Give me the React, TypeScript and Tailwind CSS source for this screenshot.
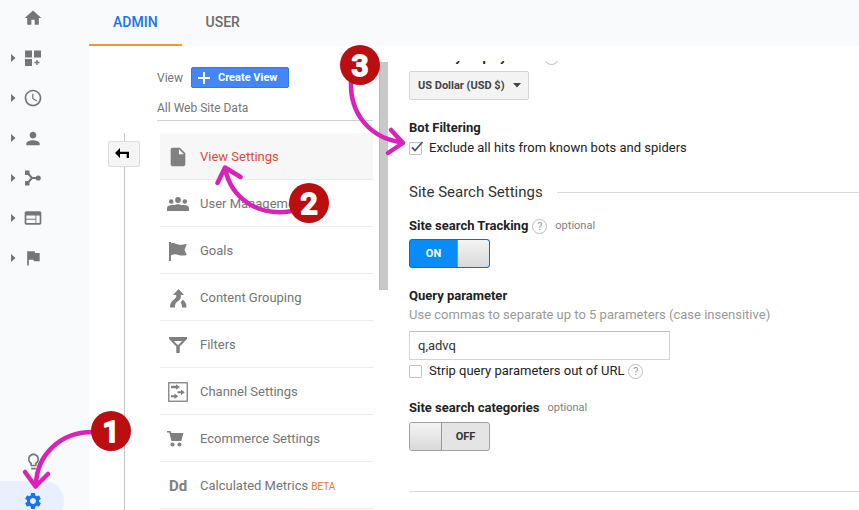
import { useState, type ReactNode } from "react";
import {
  MdAccessTime,
  MdFlag,
  MdHome,
  MdInsertDriveFile,
  MdLightbulbOutline,
  MdPerson,
  MdSettings,
  MdWeb,
} from "react-icons/md";

function DashboardIcon() {
  return (
    <svg width="16" height="16" viewBox="0 0 16 16" fill="currentColor">
      <path d="M0 .5h7v7H0zM9 .5h7v7H9zM0 9h7v7H0zM11.3 10h1.4v1.800h1.800v1.400h-1.800V15h-1.400v-1.800H9.500v-1.400h1.800z" />
    </svg>
  );
}

function BranchIcon() {
  return (
    <svg width="16" height="16" viewBox="0 0 16 16" fill="currentColor">
      <path d="M0 .5h4.500V5H0zM0 11h4.500v4.500H0z" />
      <path d="M2.500 3 7 8l-4.500 5M7 8h6" fill="none" stroke="currentColor" strokeWidth="2" />
      <circle cx="13.200" cy="8" r="2.600" />
    </svg>
  );
}

function GroupIcon() {
  return (
    <svg width="22" height="14" viewBox="0 0 22 14" fill="currentColor">
      <circle cx="11" cy="3" r="2.900" />
      <circle cx="4.200" cy="4.500" r="2.300" />
      <circle cx="17.800" cy="4.500" r="2.300" />
      <path d="M0 14v-3c0-2 2.400-3 5-3 1 0 1.900.1 2.600.3C8.500 7.500 9.700 7.200 11 7.200s2.500.3 3.400 1.100c.7-.2 1.600-.3 2.600-.3 2.600 0 5 1 5 3v3z" />
    </svg>
  );
}

function GoalIcon() {
  return (
    <svg width="18" height="19" viewBox="0 0 18 19" fill="currentColor">
      <path d="M0 0h2v1.200c4-1 5.500 1.600 9 1.600 2.500 0 4.500-.5 6.800-.8L15.500 8l2.300 5c-3 .8-5.800.8-8.300 0-2.500-.9-5-.9-7.500.2V19H0z" />
    </svg>
  );
}

function GroupingIcon() {
  return (
    <svg width="18" height="19" viewBox="0 0 18 19" fill="currentColor">
      <path d="M9.500 0 15 6h-3.200v2.500c0 1.200-.8 2-2 3C7 13.500 6 14.500 6 18.500H1c0-4.500 2-6.500 4.500-8.500C6.700 9 7.200 8.600 7.200 7.800V6H4z" />
      <path d="M11.500 13.300 14 10.800c2.300 2 3.500 4.200 3.500 7.700H13c0-2.400-.5-3.900-1.500-5.200z" />
    </svg>
  );
}

function FilterIcon() {
  return (
    <svg width="18" height="16" viewBox="0 0 18 16" fill="currentColor">
      <path fillRule="evenodd" d="M0 0h18v2l-7.300 7.500V16H7.300V9.500L0 2zM4.800 4 9 8.300 13.200 4z" />
    </svg>
  );
}

function ChannelIcon() {
  return (
    <svg width="20" height="20" viewBox="0 0 20 20" fill="currentColor">
      <rect x=".75" y=".75" width="18.500" height="18.500" fill="none" stroke="currentColor" strokeWidth="1.300" />
      <path d="M3 3.700h5V2.200L12 5 8 7.800V6.300H3zM9.500 9.300H13V7.600l3.800 2.700L13 13v-1.700H9.500zM3 13.300h3.500v-1.700l3.800 2.700L6.500 17v-1.700H3z" />
    </svg>
  );
}

function CartIcon() {
  return (
    <svg width="22" height="16" viewBox="0 0 22 16" fill="currentColor">
      <path d="M0 0h3.500l.8 2H16.500l-2.200 8H4.500L2.300 1.600H0z" />
      <circle cx="5.500" cy="13.500" r="2" />
      <circle cx="12.500" cy="13.500" r="2" />
    </svg>
  );
}

function BackIcon() {
  return (
    <svg width="18" height="12" viewBox="0 0 18 12">
      <path d="M0 5 5 0v3.700h9V10h-2.300V6H5v4z" fill="#000" />
    </svg>
  );
}

function NavItem({ label, icon, arrow = true }: { label: string; icon: ReactNode; arrow?: boolean }) {
  return (
    <button aria-label={label} className="flex h-10 w-full shrink-0 items-center pl-[11px] text-[#757575]">
      <svg width="5" height="8" viewBox="0 0 5 8" className={arrow ? "" : "invisible"}>
        <path d="M0 0l4.500 4L0 8z" fill="currentColor" />
      </svg>
      <span className="ml-[7px] flex w-5 justify-center">{icon}</span>
    </button>
  );
}

const settings: { label: string; icon: ReactNode; beta?: boolean }[] = [
  { label: "View Settings", icon: <MdInsertDriveFile size={22} /> },
  { label: "User Management", icon: <GroupIcon /> },
  { label: "Goals", icon: <GoalIcon /> },
  { label: "Content Grouping", icon: <GroupingIcon /> },
  { label: "Filters", icon: <FilterIcon /> },
  { label: "Channel Settings", icon: <ChannelIcon /> },
  { label: "Ecommerce Settings", icon: <CartIcon /> },
  { label: "Calculated Metrics", icon: <span className="text-[15px] font-bold">Dd</span>, beta: true },
];

function Help() {
  return (
    <button
      aria-label="Help"
      className="flex size-[15px] shrink-0 items-center justify-center rounded-full border border-[#bbb] text-[11px] leading-none text-[#999]"
    >
      ?
    </button>
  );
}

function Check({ id, label, initial = false }: { id: string; label: string; initial?: boolean }) {
  const [on, setOn] = useState(initial);
  return (
    <div className="flex h-5 items-center">
      <span className="relative flex">
        <input
          id={id}
          type="checkbox"
          checked={on}
          onChange={() => setOn(!on)}
          className="size-[13px] appearance-none rounded-[1px] border border-[#c4c4c4] bg-white"
        />
        {on && (
          <svg width="16" height="14" viewBox="0 0 16 14" className="pointer-events-none absolute -top-0.5 left-0">
            <path d="M3 7.500 6 10.500 13.500 2" fill="none" stroke="#555" strokeWidth="1.800" />
          </svg>
        )}
      </span>
      <label htmlFor={id} className="ml-[7px] text-[13px] leading-5 text-[#222]">
        {label}
      </label>
    </div>
  );
}

function Toggle({ id, label, initial }: { id: string; label: string; initial: boolean }) {
  const [on, setOn] = useState(initial);
  return (
    <label
      htmlFor={id}
      className={
        "relative flex h-[29px] w-[81px] overflow-hidden rounded-[3px] border text-[11px] font-bold " +
        (on ? "border-[#0b6fc4] bg-[#078cf8] text-white" : "flex-row-reverse border-[#a0a0a0] bg-[#e4e4e4] text-[#333]")
      }
    >
      <input
        id={id}
        type="checkbox"
        role="switch"
        aria-label={label}
        checked={on}
        onChange={() => setOn(!on)}
        className="sr-only"
      />
      <span className="flex flex-1 items-center justify-center pt-px">{on ? "ON" : "OFF"}</span>
      <span
        className={
          "w-8 bg-linear-to-b from-[#f4f4f4] to-[#d9d9d9] " +
          (on ? "rounded-r-[2px] border-l border-[#8f8f8f]" : "border-r border-[#999]")
        }
      />
    </label>
  );
}

function Annotations() {
  const badges = [
    { n: "1", x: 111, y: 431 },
    { n: "2", x: 309, y: 203 },
    { n: "3", x: 360, y: 65 },
  ];
  return (
    <svg width="859" height="510" viewBox="0 0 859 510" className="pointer-events-none absolute left-0 top-0">
      <g fill="none" stroke="#d922b9" strokeWidth="4.500" strokeLinecap="round" strokeLinejoin="round">
        <path d="M94 432C61 431 36 455 36 486M25 472l10.500 14.500L48 474" />
        <path d="M292 211C259 217 231 199 225 168M217.500 183l7.500-15.500 15.500 9.500" />
        <path d="M351 82C350 113 369 138 402 142.500M391 130l12 13-15 10" />
      </g>
      {badges.map((b) => (
        <g key={b.n}>
          <circle cx={b.x} cy={b.y} r="20" fill="#ba0e10" />
          <text
            x={b.x}
            y={b.y + 11}
            textAnchor="middle"
            fill="#fff"
            stroke="#fff"
            strokeWidth="2"
            strokeLinejoin="round"
            className="text-[30px] font-medium"
          >
            {b.n}
          </text>
        </g>
      ))}
    </svg>
  );
}

export default function App() {
  return (
    <div className="relative flex h-screen overflow-hidden bg-white font-[Roboto,sans-serif] text-[#222]">
      <nav className="flex w-[89px] shrink-0 flex-col overflow-hidden bg-[#f8fafc]">
        <div className="-mt-0.5">
          <NavItem label="Home" icon={<MdHome size={20} />} arrow={false} />
        </div>
        <NavItem label="Customization" icon={<DashboardIcon />} />
        <NavItem label="Realtime" icon={<MdAccessTime size={20} />} />
        <NavItem label="Audience" icon={<MdPerson size={21} />} />
        <NavItem label="Acquisition" icon={<BranchIcon />} />
        <NavItem label="Behavior" icon={<MdWeb size={20} />} />
        <NavItem label="Conversions" icon={<MdFlag size={20} />} />
        <div className="mt-[163px]">
          <NavItem label="Discover" icon={<MdLightbulbOutline size={19} />} arrow={false} />
        </div>
        <button aria-label="Admin" className="flex h-10 w-16 shrink-0 items-center rounded-r-full bg-[#e8f0fe] pl-[23px] text-[#1a73e8]">
          <MdSettings size={20} />
        </button>
      </nav>

      <div className="flex min-w-0 flex-1 flex-col">
        <header className="flex h-[46px] shrink-0 bg-[#f8fafc] text-sm font-medium">
          <button className="border-b-2 border-[#f29a2e] px-6 text-[#1a73e8]">ADMIN</button>
          <button className="border-b-2 border-transparent px-6 text-[#6b6b6b]">USER</button>
        </header>

        <div className="flex min-h-0 flex-1 overflow-hidden">
          <div className="flex w-[70px] shrink-0 flex-col items-center pt-[87px]">
            <span className="h-2 w-px bg-[#c4c4c4]" />
            <button
              aria-label="Collapse"
              className="flex h-[26px] w-8 shrink-0 items-center justify-center rounded-[2px] border border-[#dcdcdc] bg-[#f4f4f4]"
            >
              <BackIcon />
            </button>
            <span className="w-px flex-1 bg-[#c4c4c4]" />
          </div>

          <section className="-ml-0.5 w-[216px] shrink-0 pt-[21px] text-[#757575]">
            <div className="flex h-[21px] items-center text-xs">
              View
              <button className="ml-2 flex h-[21px] w-[98px] items-center rounded-[2px] border border-[#3079ed] bg-[#4486f5] pl-1.5 pt-px text-[11px] font-bold text-white">
                <svg width="12" height="12" viewBox="0 0 12 12" className="mr-2">
                  <path d="M6 0v12M0 6h12" stroke="#fff" strokeWidth="2" />
                </svg>
                Create View
              </button>
            </div>
            <div className="mt-[11px] border-b border-[#d0d0d0] pb-[3px] text-xs leading-[18px]">All Web Site Data</div>
            <ul className="ml-[3px] mt-3">
              {settings.map((s, i) => (
                <li key={s.label}>
                  <a
                    href="#"
                    className={
                      "flex h-[47px] items-center border-b border-[#ececec] pt-0.5 text-[13px] " +
                      (i === 0 ? "bg-[#f7f7f7] text-[#dd4b39]" : "text-[#757575]")
                    }
                  >
                    <span className="mr-1 flex w-9 justify-center text-[#808080]">{s.icon}</span>
                    {s.label}
                    {s.beta && <span className="ml-[3px] text-[10px] text-[#e8772e]">BETA</span>}
                  </a>
                </li>
              ))}
            </ul>
          </section>

          <div className="ml-1.5 mt-4 h-[228px] w-[9px] shrink-0 border-l border-[#bababa] bg-[#c8c8c8]" />

          <main className="ml-[21px] mt-[15px] min-w-0 flex-1 overflow-hidden text-[13px]">
            <div className="-mt-[13px] flex h-[18px] items-center gap-1.5 font-bold">
              <label htmlFor="currency">Currency displayed as</label>
              <Help />
            </div>
            <div className="relative mt-[5px] w-[120px]">
              <select
                id="currency"
                className="h-[29px] w-full appearance-none rounded-[2px] border border-[#d4d4d4] bg-[#f3f3f3] pl-2 pt-px text-[11px] font-bold text-[#444]"
              >
                <option>US Dollar (USD $)</option>
              </select>
              <svg width="8" height="5" viewBox="0 0 8 5" className="pointer-events-none absolute right-2 top-3">
                <path d="M0 0h8L4 4.500z" fill="#444" />
              </svg>
            </div>

            <h3 className="mt-[18px] font-bold leading-5">Bot Filtering</h3>
            <Check id="bots" label="Exclude all hits from known bots and spiders" initial />

            <div className="mt-[22px] flex items-center gap-3.5">
              <h2 className="text-[15px] leading-6 text-[#333]">Site Search Settings</h2>
              <span className="h-px flex-1 bg-[#dadada]" />
            </div>

            <div className="mt-3 flex h-5 items-center">
              <h3 className="mr-1 font-bold">Site search Tracking</h3>
              <Help />
              <span className="ml-2 text-[11px] text-[#808080]">optional</span>
            </div>
            <div className="mt-[3px]">
              <Toggle id="tracking" label="Site search Tracking" initial />
            </div>

            <label htmlFor="query" className="mt-[18px] block font-bold leading-5">
              Query parameter
            </label>
            <p className="leading-[18px] text-[#999]">Use commas to separate up to 5 parameters (case insensitive)</p>
            <input
              id="query"
              type="text"
              defaultValue="q,advq"
              className="mt-[7px] block h-[29px] w-[261px] border border-[#d4d4d4] border-t-[#bdbdbd] px-2 text-[13px] text-[#333]"
            />
            <div className="mt-px flex items-center gap-1">
              <Check id="strip" label="Strip query parameters out of URL" />
              <Help />
            </div>

            <div className="mt-[17px] flex h-5 items-center">
              <h3 className="font-bold">Site search categories</h3>
              <span className="ml-2 text-[11px] text-[#808080]">optional</span>
            </div>
            <div className="mt-1">
              <Toggle id="categories" label="Site search categories" initial={false} />
            </div>
            <hr className="mt-10 border-[#dadada]" />
          </main>
        </div>
      </div>
      <Annotations />
    </div>
  );
}
